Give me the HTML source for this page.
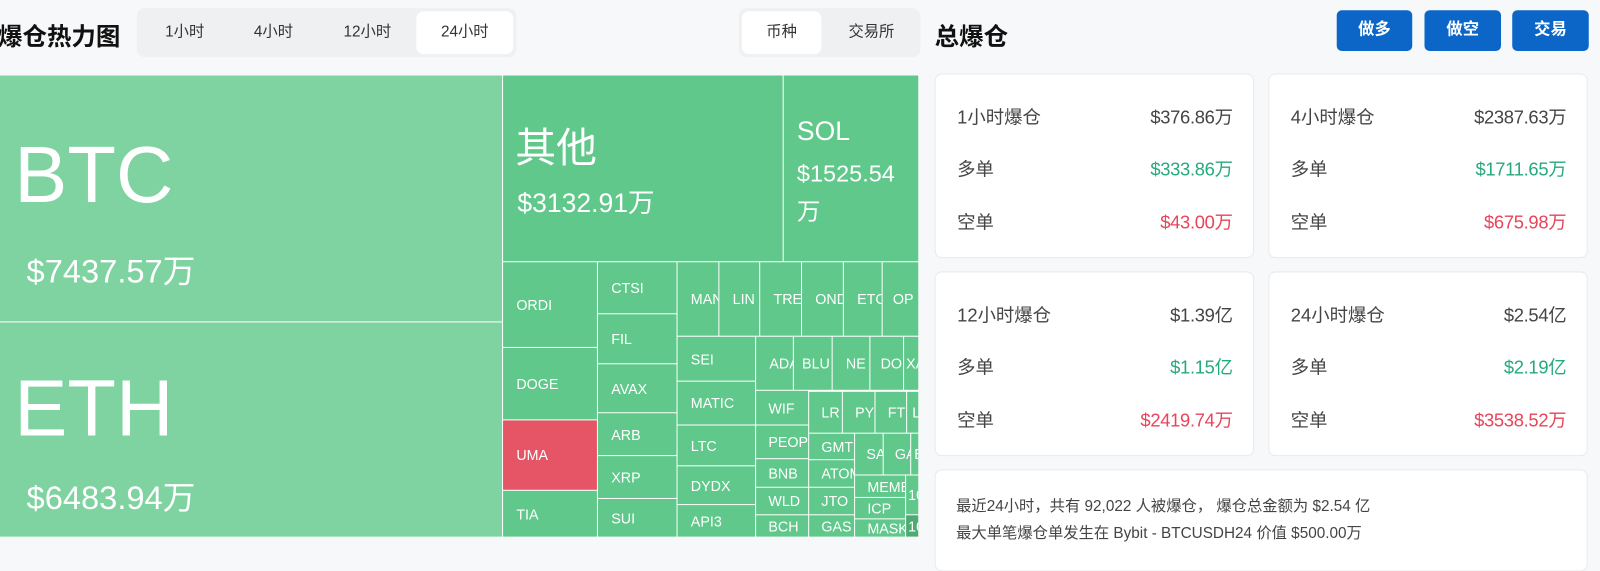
<!DOCTYPE html>
<html><head><meta charset="utf-8"><style>
html,body{margin:0;padding:0;width:1600px;height:553px;overflow:hidden;background:#f7f8f9;}
#w{position:absolute;left:0;top:0;width:1568px;height:542px;transform:scale(1.0204);transform-origin:0 0;font-family:"Liberation Sans","Noto Sans CJK SC",sans-serif;}
.a{position:absolute;}
.tm{position:absolute;left:0;top:74px;width:900px;height:452px;background:#fff;overflow:hidden;}
.c{position:absolute;background:#5fc88a;color:#fff;font-size:14px;display:flex;align-items:center;padding-left:13px;box-sizing:border-box;overflow:hidden;white-space:nowrap;}
.big{position:absolute;background:#7ed3a0;color:#fff;}
.tabs{position:absolute;background:#eef0f2;border-radius:8px;height:48px;top:8px;}
.tab{position:absolute;top:3px;height:42px;line-height:42px;text-align:center;font-size:15px;color:#333;border-radius:7px;}
.on{background:#fff;}
.btn{position:absolute;top:10px;height:40px;line-height:40px;background:#0b66c8;color:#fff;border-radius:5px;text-align:center;font-size:16px;font-weight:bold;width:74px;}
.card{position:absolute;background:#fff;border:1px solid #e8eaec;border-radius:7px;box-sizing:border-box;}
.r{position:absolute;left:21px;right:20px;font-size:18px;color:#444;height:26px;line-height:26px;}
.r span{float:right;letter-spacing:-0.3px;}
.g{color:#26a97f;}.d{color:#e8445a;}
</style></head><body><div id="w">
<div class="a" style="left:-2px;top:16px;font-size:24px;font-weight:bold;color:#111;">爆仓热力图</div>
<div class="tabs" style="left:134px;width:372px;">
<div class="tab" style="left:6px;width:82px;">1小时</div>
<div class="tab" style="left:94px;width:80px;">4小时</div>
<div class="tab" style="left:180px;width:92px;">12小时</div>
<div class="tab on" style="left:274px;width:95px;">24小时</div>
</div>
<div class="tabs" style="left:724px;width:178px;">
<div class="tab on" style="left:3px;width:78px;">币种</div>
<div class="tab" style="left:86px;width:88px;">交易所</div>
</div>
<div class="a" style="left:916px;top:16px;font-size:24px;font-weight:bold;color:#111;">总爆仓</div>
<div class="btn" style="left:1310px;">做多</div>
<div class="btn" style="left:1396px;width:75px;">做空</div>
<div class="btn" style="left:1482px;width:75px;">交易</div>

<div class="tm">
<div class="big" style="left:0;top:0;width:492px;height:241px;">
<div class="a" style="left:14px;top:52px;font-size:78px;line-height:90px;">BTC</div>
<div class="a" style="left:26px;top:172px;font-size:32px;line-height:40px;">$7437.57万</div></div>
<div class="big" style="left:0;top:242px;width:492px;height:210px;">
<div class="a" style="left:14px;top:39px;font-size:78px;line-height:90px;">ETH</div>
<div class="a" style="left:26px;top:152px;font-size:32px;line-height:40px;">$6483.94万</div></div>
<div class="c" style="left:493px;top:0;width:274px;height:182px;display:block;padding:0;">
<div class="a" style="left:12px;top:46px;font-size:40px;line-height:52px;">其他</div>
<div class="a" style="left:14px;top:108px;font-size:26px;line-height:34px;">$3132.91万</div></div>
<div class="c" style="left:768px;top:0;width:132px;height:182px;display:block;padding:0;">
<div class="a" style="left:13px;top:37px;font-size:26px;line-height:34px;">SOL</div>
<div class="a" style="left:13px;top:79px;font-size:23px;line-height:34px;">$1525.54</div>
<div class="a" style="left:13px;top:116px;font-size:23px;line-height:34px;">万</div></div>

<div class="c" style="left:493px;top:183px;width:92px;height:83px;">ORDI</div>
<div class="c" style="left:493px;top:267px;width:92px;height:70px;">DOGE</div>
<div class="c" style="left:493px;top:338px;width:92px;height:68px;background:#e55566;">UMA</div>
<div class="c" style="left:493px;top:407px;width:92px;height:45px;">TIA</div>

<div class="c" style="left:586px;top:183px;width:77px;height:50px;">CTSI</div>
<div class="c" style="left:586px;top:234px;width:77px;height:48px;">FIL</div>
<div class="c" style="left:586px;top:283px;width:77px;height:47px;">AVAX</div>
<div class="c" style="left:586px;top:331px;width:77px;height:41px;">ARB</div>
<div class="c" style="left:586px;top:373px;width:77px;height:41px;">XRP</div>
<div class="c" style="left:586px;top:415px;width:77px;height:37px;">SUI</div>

<div class="c" style="left:664px;top:183px;width:40px;height:72px;">MAN</div>
<div class="c" style="left:705px;top:183px;width:39px;height:72px;">LIN</div>
<div class="c" style="left:745px;top:183px;width:40px;height:72px;">TRE</div>
<div class="c" style="left:786px;top:183px;width:40px;height:72px;">OND</div>
<div class="c" style="left:827px;top:183px;width:37px;height:72px;">ETC</div>
<div class="c" style="left:865px;top:183px;width:35px;height:72px;padding-left:10px;">OP</div>

<div class="c" style="left:664px;top:256px;width:76px;height:43px;">SEI</div>
<div class="c" style="left:664px;top:300px;width:76px;height:42px;">MATIC</div>
<div class="c" style="left:664px;top:343px;width:76px;height:39px;">LTC</div>
<div class="c" style="left:664px;top:383px;width:76px;height:37px;">DYDX</div>
<div class="c" style="left:664px;top:421px;width:76px;height:31px;">API3</div>

<div class="c" style="left:741px;top:256px;width:36px;height:52px;">ADA</div>
<div class="c" style="left:778px;top:256px;width:37px;height:52px;padding-left:8px;">BLU</div>
<div class="c" style="left:816px;top:256px;width:36px;height:52px;">NE</div>
<div class="c" style="left:853px;top:256px;width:32px;height:52px;padding-left:10px;">DO</div>
<div class="c" style="left:886px;top:256px;width:14px;height:52px;padding-left:2px;">XA</div>

<div class="c" style="left:741px;top:309px;width:51px;height:33px;padding-left:12px;">WIF</div>
<div class="c" style="left:741px;top:343px;width:51px;height:32px;padding-left:12px;">PEOP</div>
<div class="c" style="left:741px;top:376px;width:51px;height:27px;padding-left:12px;">BNB</div>
<div class="c" style="left:741px;top:404px;width:51px;height:26px;padding-left:12px;">WLD</div>
<div class="c" style="left:741px;top:431px;width:51px;height:21px;padding-left:12px;">BCH</div>

<div class="c" style="left:793px;top:310px;width:32px;height:40px;padding-left:12px;">LR</div>
<div class="c" style="left:826px;top:310px;width:31px;height:40px;padding-left:12px;">PY</div>
<div class="c" style="left:858px;top:310px;width:30px;height:40px;padding-left:12px;">FT</div>
<div class="c" style="left:889px;top:310px;width:11px;height:40px;padding-left:5px;">LD</div>

<div class="c" style="left:793px;top:351px;width:44px;height:25px;padding-left:12px;">GMT</div>
<div class="c" style="left:793px;top:377px;width:44px;height:26px;padding-left:12px;">ATOM</div>
<div class="c" style="left:793px;top:404px;width:44px;height:26px;padding-left:12px;">JTO</div>
<div class="c" style="left:793px;top:431px;width:44px;height:21px;padding-left:12px;">GAS</div>

<div class="c" style="left:838px;top:351px;width:27px;height:40px;padding-left:11px;">SA</div>
<div class="c" style="left:866px;top:351px;width:26px;height:40px;padding-left:11px;">GA</div>
<div class="c" style="left:893px;top:351px;width:7px;height:40px;padding-left:3px;">E</div>

<div class="c" style="left:838px;top:392px;width:49px;height:21px;padding-left:12px;">MEME</div>
<div class="c" style="left:838px;top:414px;width:49px;height:20px;padding-left:12px;">ICP</div>
<div class="c" style="left:838px;top:435px;width:49px;height:17px;padding-left:12px;">MASK</div>
<div class="c" style="left:888px;top:392px;width:12px;height:38px;padding-left:2px;">10</div>
<div class="c" style="left:888px;top:431px;width:12px;height:21px;padding-left:2px;background:#4eaa72;">10</div>
</div>

<div class="card" style="left:916px;top:72px;width:313px;height:181px;">
<div class="r" style="top:29px;">1小时爆仓<span>$376.86万</span></div>
<div class="r" style="top:80px;">多单<span class="g">$333.86万</span></div>
<div class="r" style="top:132px;">空单<span class="d">$43.00万</span></div></div>
<div class="card" style="left:1243px;top:72px;width:313px;height:181px;">
<div class="r" style="top:29px;">4小时爆仓<span>$2387.63万</span></div>
<div class="r" style="top:80px;">多单<span class="g">$1711.65万</span></div>
<div class="r" style="top:132px;">空单<span class="d">$675.98万</span></div></div>
<div class="card" style="left:916px;top:266px;width:313px;height:181px;">
<div class="r" style="top:29px;">12小时爆仓<span>$1.39亿</span></div>
<div class="r" style="top:80px;">多单<span class="g">$1.15亿</span></div>
<div class="r" style="top:132px;">空单<span class="d">$2419.74万</span></div></div>
<div class="card" style="left:1243px;top:266px;width:313px;height:181px;">
<div class="r" style="top:29px;">24小时爆仓<span>$2.54亿</span></div>
<div class="r" style="top:80px;">多单<span class="g">$2.19亿</span></div>
<div class="r" style="top:132px;">空单<span class="d">$3538.52万</span></div></div>
<div class="card" style="left:916px;top:460px;width:640px;height:100px;">
<div class="a" style="left:20px;top:23px;font-size:15px;line-height:26px;color:#444;">最近24小时，共有 92,022 人被爆仓， 爆仓总金额为 $2.54 亿<br>最大单笔爆仓单发生在 Bybit - BTCUSDH24 价值 $500.00万</div></div>
</div></body></html>
